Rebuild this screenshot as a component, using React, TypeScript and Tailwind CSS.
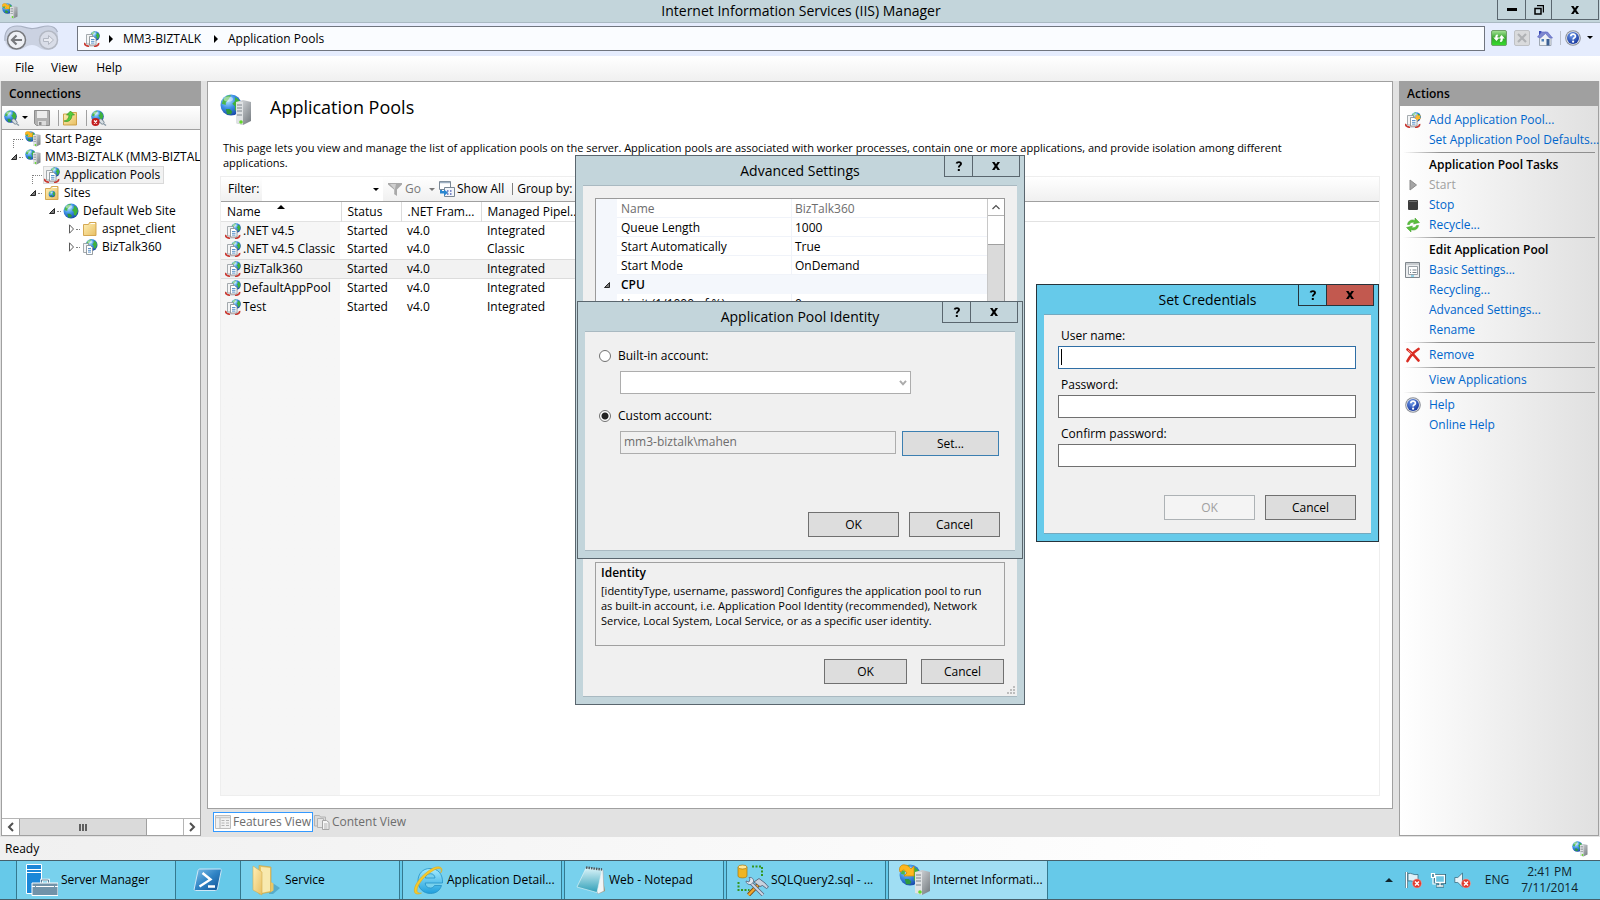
import { useState } from 'react';
import type { ReactNode } from 'react';
import { clsx } from 'clsx';

/* ---------- icons ---------- */

type IconProps = { className?: string };

// Gradients shared by every icon on the page
function IconDefs() {
  return (
    <svg width="0" height="0" className="absolute" aria-hidden="true">
      <defs>
        <radialGradient id="globe" cx="0.35" cy="0.3" r="0.8">
          <stop offset="0" stopColor="#b5e6ff" />
          <stop offset="0.45" stopColor="#3d90e6" />
          <stop offset="1" stopColor="#123c9c" />
        </radialGradient>
        <linearGradient id="steel" x1="0" y1="0" x2="1" y2="1">
          <stop offset="0" stopColor="#e4e7ea" />
          <stop offset="1" stopColor="#71777c" />
        </linearGradient>
        <linearGradient id="folder" x1="0" y1="0" x2="1" y2="1">
          <stop offset="0" stopColor="#fff0b8" />
          <stop offset="1" stopColor="#e8bf62" />
        </linearGradient>
        <radialGradient id="help" cx="0.4" cy="0.3" r="0.8">
          <stop offset="0" stopColor="#6f9bea" />
          <stop offset="1" stopColor="#0a2a94" />
        </radialGradient>
        <linearGradient id="ie" x1="0" y1="0" x2="0" y2="1">
          <stop offset="0" stopColor="#a5ecff" />
          <stop offset="1" stopColor="#1f9fdc" />
        </linearGradient>
        <linearGradient id="power" x1="0" y1="0" x2="1" y2="1">
          <stop offset="0" stopColor="#7fc0ea" />
          <stop offset="0.5" stopColor="#2f83c4" />
          <stop offset="1" stopColor="#0f4f93" />
        </linearGradient>
        <linearGradient id="pad" x1="0" y1="0" x2="0" y2="1">
          <stop offset="0" stopColor="#d9f3f8" />
          <stop offset="1" stopColor="#2f9fb8" />
        </linearGradient>
        <linearGradient id="go" x1="0" y1="0" x2="0" y2="1">
          <stop offset="0" stopColor="#a7e59a" />
          <stop offset="0.5" stopColor="#35a52c" />
          <stop offset="1" stopColor="#35e02c" />
        </linearGradient>
      </defs>
    </svg>
  );
}

function GlobeShape({ cx, cy, r }: { cx: number; cy: number; r: number }) {
  return (
    <g transform={`translate(${cx} ${cy}) scale(${r / 8})`}>
      <circle r="8" fill="url(#globe)" />
      <path d="M-6 -4 C-4 -7 -1 -8 0 -7 L-2 -4 L-4 -2 L-4 0 L-7 -1Z" fill="#4cb848" />
      <path d="M3 -6 C6 -5 8 -2 7 1 L5 5 L3 4 L3 1 L1 -1 L3 -3Z" fill="#3fb23c" />
      <path d="M-4 3 L-1 3 L1 5 L0 7 L-3 7Z" fill="#2f9a3c" />
      <ellipse cx="-2" cy="-4.5" rx="3.5" ry="2" fill="#fff" opacity="0.45" />
    </g>
  );
}

function GlobeIcon({ className }: IconProps) {
  return (
    <svg viewBox="0 0 16 16" className={clsx('size-4 shrink-0', className)} aria-hidden="true">
      <GlobeShape cx={8} cy={8} r={7.5} />
    </svg>
  );
}

function ServerGlobeIcon({ className, arrow = false }: IconProps & { arrow?: boolean }) {
  return (
    <svg viewBox="0 0 32 32" className={clsx('shrink-0', className ?? 'size-4')} aria-hidden="true">
      <GlobeShape cx={11} cy={11} r={10.5} />
      <path d="M16 8 L23 6 L31 8 V27 L23 31 L16 29Z" fill="url(#steel)" />
      <path d="M16 8 L23 8 V31 L16 29Z" fill="#dfe2e4" />
      <path d="M17 11h5M17 14h5M17 17h5M17 21h5" stroke="#7f868b" strokeWidth="1.2" />
      <circle cx="21" cy="28" r="1.8" fill="#63d82a" />
      {arrow && (
        <path
          d="M1 8 C-1 3 3 0 6 1 C9 1 10 3 12 5 L15 2 V12 H5 L8 9 C6 6 4 5 3 7Z"
          fill="#ffb81e"
          stroke="#d08a08"
          strokeWidth="0.8"
        />
      )}
    </svg>
  );
}

function PoolIcon({ className, spark = false }: IconProps & { spark?: boolean }) {
  return (
    <svg viewBox="0 0 16 16" className={clsx('size-4 shrink-0', className)} aria-hidden="true">
      <GlobeShape cx={11} cy={5} r={4.8} />
      <path d="M1 12 C0 14 3 15.500 8 15.500 S15 14 14.500 12" fill="none" stroke="#c93a32" strokeWidth="1.700" />
      <path d="M5 15.300h5" stroke="#d9dee2" strokeWidth="1.500" />
      <path d="M2.500 3.500h6v9.500h-6z" fill="#f4f5f6" stroke="#8f979c" strokeWidth="0.800" />
      <path d="M5.500 5.500h4l2.500 2v6.500h-6.500z" fill="#fff" stroke="#7d868c" strokeWidth="0.800" />
      <path d="M7 8.500h3.500M7 10.300h3.500M7 12.100h3.500" stroke="#4a86c4" strokeWidth="0.900" />
      {spark && (
        <path
          d="M12.500 1.500l1 2.300 2.400-.8-1.300 2.200 1.400 1.800-2.400.1-1.100 2.200-.9-2.200-2.300-.3 1.600-1.700-1.200-2.200 2.200.8z"
          fill="#ffb62e"
        />
      )}
    </svg>
  );
}

function AppIcon() {
  return (
    <svg viewBox="0 0 16 16" className="size-4 shrink-0" aria-hidden="true">
      <GlobeShape cx={9.500} cy={6} r={6} />
      <path d="M1.500 4.500h5v9h-5z" fill="#f4f5f6" stroke="#8f979c" strokeWidth="0.800" />
      <path d="M4.500 6.500h4l2 2v7h-6z" fill="#fff" stroke="#7d868c" strokeWidth="0.800" />
      <path d="M6 9.500h3M6 11.300h3M6 13.100h3" stroke="#4a86c4" strokeWidth="0.900" />
    </svg>
  );
}

function FolderIcon({ globe = false }: { globe?: boolean }) {
  return (
    <svg viewBox="0 0 16 16" className="size-4 shrink-0" aria-hidden="true">
      <path d="M1.500 3.500h5l1-2h6.500v13H1.500z" fill="url(#folder)" stroke="#d0a046" strokeWidth="0.900" />
      <path d="M8.500 2.500h4.500" stroke="#fff" />
      {globe && <GlobeShape cx={8} cy={9} r={3.300} />}
    </svg>
  );
}

function UpFolderIcon() {
  return (
    <svg viewBox="0 0 16 16" className="size-4 shrink-0" aria-hidden="true">
      <path d="M1.500 4h6l1-1.500h6v12.500h-13z" fill="url(#folder)" stroke="#c89b3e" strokeWidth="0.900" />
      <path d="M2 11C5 11 7 8 7 5H4.500L8.500 1l4 4H10C10 9 7 13 2 11z" fill="#55cc3c" stroke="#2d8f20" strokeWidth="0.600" />
    </svg>
  );
}

function ConnectIcon({ error = false }: { error?: boolean }) {
  return (
    <svg viewBox="0 0 16 16" className="size-4 shrink-0" aria-hidden="true">
      <GlobeShape cx={6.500} cy={6.500} r={6.300} />
      <path d="M9.500 10.500l2 2" stroke="#6d7f8c" strokeWidth="4" strokeLinecap="round" />
      <path d="M9.500 10.500l2 2" stroke="#d5dde2" strokeWidth="2.500" strokeLinecap="round" />
      <path d="M13 14l2 1.500" stroke="#8a9aa6" strokeWidth="1.400" />
      {error && (
        <>
          <circle cx="4.500" cy="12" r="4" fill="#c31d1d" />
          <path d="M3 10.500l3 3M6 10.500l-3 3" stroke="#fff" strokeWidth="1.300" />
        </>
      )}
    </svg>
  );
}

function SaveIcon() {
  return (
    <svg viewBox="0 0 16 16" className="size-4 shrink-0" aria-hidden="true">
      <path d="M.5.500h15v15h-13l-2-2z" fill="#b0b0b0" stroke="#8c8c8c" />
      <path d="M3 1h10v7H3z" fill="#ececec" />
      <path d="M4 11h8v4.500H4z" fill="#dcdcdc" />
      <path d="M5 12h2.500v3H5z" fill="#8c8c8c" />
    </svg>
  );
}

function HelpIcon() {
  return (
    <svg viewBox="0 0 16 16" className="size-4 shrink-0" aria-hidden="true">
      <circle cx="8" cy="8" r="7.800" fill="#8b8f98" />
      <circle cx="8" cy="8" r="6.800" fill="#e6e9ef" />
      <circle cx="8" cy="8" r="6" fill="url(#help)" />
      <path d="M5.800 6.300C5.800 3.300 10.400 3.300 10.400 6.200 10.400 7.900 8.100 7.700 8.100 9.600" fill="none" stroke="#fff" strokeWidth="1.700" />
      <circle cx="8.100" cy="11.700" r="1.100" fill="#fff" />
    </svg>
  );
}

function HistoryPill() {
  return (
    <svg viewBox="0 0 56 28" className="h-7 w-14 shrink-0" aria-hidden="true">
      <path
        d="M1 14 C1 5 6 1 13 1 C21 1 22 4 29 3.500 C36 3 38 1 44 1 C51 1 54 5 54 12 C54 20 50 25 43 25 C36 25 34 20 28 20 C22 20 20 25 12 25 C5 25 1 20 1 14Z"
        fill="#cbd2e2"
      />
      <path d="M1 16C0 5 6 1 13 1c8 0 9 3 16 2.500C36 3 38 1 44 1c5 0 8 2 9.500 6" fill="none" stroke="#a9b1c3" strokeWidth="1.200" />
      <circle cx="12.500" cy="15" r="9" fill="#eef0f5" stroke="#77797d" strokeWidth="1.500" />
      <path d="M18 15H8M12.500 10.500L8 15l4.500 4.500" fill="none" stroke="#77797d" strokeWidth="2.200" />
      <circle cx="44.500" cy="15" r="9" fill="#d9dde8" stroke="#b3b8c3" strokeWidth="1.500" />
      <path d="M39.500 13.500h5v-3l5 4.500-5 4.500v-3h-5z" fill="#e8eaf1" stroke="#b3b8c3" />
    </svg>
  );
}

function RefreshIcon() {
  return (
    <svg viewBox="0 0 16 16" className="size-4 shrink-0" aria-hidden="true">
      <rect x="0.500" y="0.500" width="15" height="15" rx="1.500" fill="url(#go)" stroke="#6f9f6b" />
      <path d="M6.500 4.500C4.500 4.500 4.300 6 4.300 7.500H2.300L5.500 11 8.500 7.500h-2c0-1.300 0-1.800.8-2.200z" fill="#fff" />
      <path d="M9.500 12c2 0 2.300-1.500 2.300-3.500h2L10.500 5 7.800 8.500h1.800c0 1.500 0 2-.9 2.500z" fill="#fff" />
    </svg>
  );
}

function StopLoadIcon() {
  return (
    <svg viewBox="0 0 16 16" className="size-4 shrink-0" aria-hidden="true">
      <rect x="0.500" y="0.500" width="15" height="15" rx="1.500" fill="#d9dadc" stroke="#bfc1c5" />
      <path d="M4 4l8 8M12 4l-8 8" stroke="#b0b2b5" strokeWidth="2.200" />
    </svg>
  );
}

function HomeIcon() {
  return (
    <svg viewBox="0 0 16 16" className="size-4 shrink-0" aria-hidden="true">
      <path d="M2 1h2.500v5H2z" fill="#3849b5" />
      <path d="M2.500 7.500L8.500 2l5.500 6v7.500H2.500z" fill="#eef1f4" stroke="#8e97a2" strokeWidth="0.800" />
      <path d="M.5 7L4.500 2h6l5 6h-3L8.500 3.500 3.500 8z" fill="#7f88cf" stroke="#5561c4" strokeWidth="0.600" />
      <path d="M9.500 9h3v6.500h-3z" fill="#3b5f93" />
      <path d="M4.500 9h2.500v2.500H4.500z" fill="#4f7fb8" />
    </svg>
  );
}

function FunnelIcon() {
  return (
    <svg viewBox="0 0 16 16" className="size-4 shrink-0" aria-hidden="true">
      <path d="M1 2h14v1.500L10 8.500V15l-3-2V8.500L1 3.500z" fill="#a9a9a9" />
      <path d="M3 3h6l-1 5v5l-.500-.500V8z" fill="#cfcfcf" />
    </svg>
  );
}

function ShowAllIcon() {
  return (
    <svg viewBox="0 0 16 16" className="size-4 shrink-0" aria-hidden="true">
      <path d="M.5.500h11v8H.5z" fill="#fff" stroke="#7a8794" />
      <path d="M1 1.500h10" stroke="#9fb0c2" strokeWidth="1.500" />
      <path d="M5.500 6.500h10v9h-10z" fill="#f2f5fa" stroke="#7a8794" />
      <path d="M8 10h1.500M11 10h1.500M8 13h1.500M11 13h1.500" stroke="#5566b8" strokeWidth="1.500" />
      <path d="M1 9v3.500h4V15l4-3.500L5 8.500V10H3V9z" fill="#2a86d0" />
    </svg>
  );
}

function PlayIcon() {
  return (
    <svg viewBox="0 0 16 16" className="size-4 shrink-0" aria-hidden="true">
      <path d="M5 3l6.500 5L5 13z" fill="#a5a5a5" stroke="#8b8b8b" />
    </svg>
  );
}

function StopIcon() {
  return (
    <svg viewBox="0 0 16 16" className="size-4 shrink-0" aria-hidden="true">
      <rect x="3" y="3" width="10" height="10" rx="1" fill="#3c3c3c" />
      <path d="M4 4.500h8" stroke="#6d6d6d" />
    </svg>
  );
}

function RecycleIcon() {
  return (
    <svg viewBox="0 0 16 16" className="size-4 shrink-0" aria-hidden="true">
      <path d="M2.500 7.500C3 3.500 7 2 10 3.500V1l4.500 4.500-6 1.500 1-1.500C7 5 5 5.500 4.500 7.500z" fill="#58c03a" stroke="#3f9a28" strokeWidth="0.500" />
      <path d="M13.500 8.500c-.5 4-4.500 5.500-7.500 4V15l-4.500-4.500 6-1.500-1 1.500c2.500.500 4.500 0 5-2z" fill="#58c03a" stroke="#3f9a28" strokeWidth="0.500" />
    </svg>
  );
}

function SettingsIcon() {
  return (
    <svg viewBox="0 0 16 16" className="size-4 shrink-0" aria-hidden="true">
      <path d="M.5.500h14v15H.5z" fill="#eceef0" stroke="#80878d" />
      <path d="M1 2h13" stroke="#a3a9ae" />
      <path d="M3.500 4.500h9v8h-9z" fill="#fff" stroke="#9aa1a7" />
      <path d="M5 8h1M5 10.500h1M7.500 8h4M7.500 10.500h4" stroke="#77818a" />
      <path d="M6 14h3" stroke="#35b5dd" />
    </svg>
  );
}

function RemoveIcon() {
  return (
    <svg viewBox="0 0 16 16" className="size-4 shrink-0" aria-hidden="true">
      <path d="M2.500 2.500C6 5 10 9 13.500 13.500M13.500 2C9 5 5 9 2.500 14" fill="none" stroke="#d92c22" strokeWidth="2.700" strokeLinecap="round" />
      <path d="M3 3l4 4" stroke="#f58a80" />
    </svg>
  );
}

function FeaturesIcon() {
  return (
    <svg viewBox="0 0 16 16" className="size-4 shrink-0" aria-hidden="true">
      <path d="M.5 1.500h15v13H.5z" fill="#f1f1f1" stroke="#bcbcbc" />
      <path d="M1 3.500h14M5 4v10" stroke="#c9c9c9" strokeWidth="1.500" />
      <path d="M6.500 6.500h3M6.500 9h3M6.500 11.500h3M11 6.500h3M11 9h3M11 11.500h3" stroke="#b4b4b4" />
    </svg>
  );
}

function ContentIcon() {
  return (
    <svg viewBox="0 0 16 16" className="size-4 shrink-0" aria-hidden="true">
      <path d="M.5 1.500h5l1 1.500h5v9H.5z" fill="#dadada" stroke="#b3b3b3" />
      <path d="M3.500 4.500h6v9h-6z" fill="#e6e6e6" stroke="#b3b3b3" />
      <path d="M8.500 6.500h4l2.500 2v7H8.500z" fill="#f6f6f6" stroke="#a5a5a5" />
      <path d="M10 10h3.500M10 12h3.500M10 14h3.500" stroke="#b0b0b0" />
    </svg>
  );
}

function Caret({ className }: IconProps) {
  return (
    <svg viewBox="0 0 6 3" className={clsx('h-[3px] w-1.5 shrink-0', className)} aria-hidden="true">
      <path d="M0 0h6L3 3z" fill="currentColor" />
    </svg>
  );
}

function Expander({ open }: { open: boolean }) {
  return (
    <svg viewBox="0 0 10 10" className="size-2.5 shrink-0" aria-hidden="true">
      {open ? (
        <path d="M7.500 2.500v5h-5z" fill="#7a7a7a" stroke="#262626" />
      ) : (
        <path d="M3.500 .8l4 4.200-4 4.200z" fill="#fff" stroke="#5a5a5a" />
      )}
    </svg>
  );
}

function CloseGlyph() {
  return (
    <svg viewBox="0 0 10 8" className="h-2 w-2.5" aria-hidden="true">
      <path d="M1 0h2.500L5 2.300 6.500 0H9L6.300 4 9 8H6.500L5 5.700 3.500 8H1l2.700-4z" fill="#000" />
    </svg>
  );
}

function HelpGlyph() {
  return (
    <svg viewBox="0 0 8 10" className="h-2.5 w-2" aria-hidden="true">
      <path d="M1.500 2.500C2 .800 6 .500 6 2.800 6 4.500 3.800 4.300 3.800 6.500" fill="none" stroke="#000" strokeWidth="1.900" />
      <path d="M2.800 8h2v2h-2z" fill="#000" />
    </svg>
  );
}

/* ---------- taskbar icons ---------- */

function ServerManagerIcon() {
  return (
    <svg viewBox="0 0 32 32" className="size-8 shrink-0" aria-hidden="true">
      <path d="M.5.500h15v29H.5z" fill="#1b87d8" stroke="#fff" />
      <path d="M1 5.500h14M1 8.500h14" stroke="#fff" />
      <path d="M15.500 19v-3h7v3" fill="none" stroke="#fff" strokeWidth="2.500" />
      <path d="M15.500 19v-3h7v3" fill="none" stroke="#5a7e96" strokeWidth="1" />
      <path d="M6 19h26v12.500H6z" fill="#7193a9" stroke="#fff" />
      <path d="M6 22.500h26" stroke="#fff" strokeDasharray="3 1 18 1 3 1" />
    </svg>
  );
}

function PowerShellIcon() {
  return (
    <svg viewBox="0 0 32 32" className="size-8 shrink-0" aria-hidden="true">
      <path d="M8 5h20c1 0 1.500.500 1.300 1.500L25.500 25c-.3 1-1 1.500-2 1.500h-20c-1 0-1.500-.5-1.300-1.500L6 6.500C6.300 5.500 7 5 8 5z" fill="url(#power)" stroke="#cde7f7" />
      <path d="M10.500 9l8 6.500-11 7M16 22.500h7" fill="none" stroke="#fff" strokeWidth="2.400" />
    </svg>
  );
}

function ExplorerIcon() {
  return (
    <svg viewBox="0 0 32 32" className="size-8 shrink-0" aria-hidden="true">
      <path d="M20 18l9 6-7 6h-4z" fill="#3f93b3" opacity="0.600" />
      <path d="M8 1.500l12 1.500v25l-12 2z" fill="#e8c764" stroke="#c9a040" strokeWidth="0.600" />
      <path d="M10 3l9 1v23l-9 2z" fill="#f8e9ae" />
      <path d="M2 2l9 6v23l-9-5z" fill="url(#folder)" stroke="#d5ae4d" strokeWidth="0.600" />
      <path d="M20 18l2.500 1.500v7L20 28z" fill="#e9c766" />
    </svg>
  );
}

function ExplorerBrowserIcon() {
  return (
    <svg viewBox="0 0 32 32" className="size-8 shrink-0" aria-hidden="true">
      <path
        d="M17 4.500C9.500 4.500 5 10 5 17s5 12.500 12.500 12.500c5.500 0 9.500-3 11-8h-7c-1 1.700-2.200 2.500-4 2.500-3.300 0-5.200-2-5.300-5H29.500C30 10 25 4.500 17 4.500zM12.300 14c.4-2.800 2.200-4.300 5-4.300s4.400 1.500 4.700 4.300z"
        fill="url(#ie)"
        stroke="#2492c6"
        strokeWidth="0.800"
      />
      <path
        d="M29 6C29 1 21 2 14 8 6 14 0 23 1.500 28c.8 2.500 4 2.500 7 1-3 .500-4.500-.5-4.500-2.500C4 22 9.500 14 16 9.500 21.500 5 27 3 28 5.500 28.500 6.500 28 8 27.500 9 28.500 8 29 7 29 6z"
        fill="#f7c92a"
        stroke="#dda414"
        strokeWidth="0.500"
      />
    </svg>
  );
}

function NotepadIcon() {
  return (
    <svg viewBox="0 0 32 32" className="size-8 shrink-0" aria-hidden="true">
      <path d="M26 5l4 22-5 2z" fill="#a98a4f" />
      <path d="M11 3.500L28 6l1 21-6 3z" fill="#f2f5f6" stroke="#9aa5aa" strokeWidth="0.600" />
      <path d="M11 4l16 2-5 22.500L2 23z" fill="url(#pad)" stroke="#e8f6f9" strokeWidth="0.600" />
      <path d="M11 3.500l16 2" stroke="#4c5a60" strokeWidth="2.500" strokeDasharray="1.500 1" />
    </svg>
  );
}

function SqlIcon() {
  return (
    <svg viewBox="0 0 32 32" className="size-8 shrink-0" aria-hidden="true">
      <path d="M15 2.500h10v11M1.500 18v8h11" fill="none" stroke="#35961f" strokeWidth="2" strokeDasharray="2 1.500" />
      <path d="M1 3v9c0 2.500 9 2.500 9 0V3z" fill="#efb522" stroke="#a87708" strokeWidth="0.700" />
      <ellipse cx="5.500" cy="3" rx="4.500" ry="2" fill="#ffe89a" stroke="#a87708" strokeWidth="0.700" />
      <path d="M22 20L11.500 31" stroke="#7d4a12" strokeWidth="4" />
      <path d="M22 20L11.500 31" stroke="#f0a62c" strokeWidth="2.500" />
      <path d="M13 18l13 13" stroke="#5b667d" strokeWidth="3.500" />
      <path d="M13 18l13 13" stroke="#cdd6e4" strokeWidth="2" />
      <path d="M9 17l3 1 1-3-1-1.500c3-.5 5 1.500 4.500 4.500L14 20.500C11.500 21 9 19.500 9 17z" fill="#dfe6ee" stroke="#56627c" strokeWidth="0.800" />
      <path d="M17 18l5-3.500 6 4.500 3.500 4-2 1.500-4-3-2.500 1z" fill="#c9d2de" stroke="#4a5570" strokeWidth="0.800" />
    </svg>
  );
}

/* ---------- shared bits ---------- */

const pushButton =
  'flex h-[25px] items-center justify-center border text-xs focus:outline-none disabled:border-[#adb2b5] disabled:bg-[#f4f4f4] disabled:text-[#a0a0a0]';

function PushButton({
  children,
  className,
  accent = false,
  disabled = false,
}: {
  children: ReactNode;
  className?: string;
  accent?: boolean;
  disabled?: boolean;
}) {
  return (
    <button
      type="button"
      disabled={disabled}
      className={clsx(pushButton, 'bg-[#dddddd]', accent ? 'border-[#3c7fb1]' : 'border-[#707070]', className)}
    >
      {children}
    </button>
  );
}

function Dialog({
  title,
  children,
  className,
  active = false,
}: {
  title: string;
  children: ReactNode;
  className: string;
  active?: boolean;
}) {
  return (
    <section
      role="dialog"
      aria-label={title}
      className={clsx(
        'absolute flex flex-col border px-[7px] pb-[7px]',
        active ? 'border-[#26343c] bg-[#66caea]' : 'border-[#5a666e] bg-[#c3d5db]',
        className,
      )}
    >
      <header className="relative flex h-[29px] shrink-0 items-center justify-center">
        <h2 className="text-sm leading-5">{title}</h2>
        <div
          className={clsx(
            'absolute right-[-3px] top-0 flex h-[21px] divide-x border border-t-0',
            active ? 'divide-[#26343c] border-[#26343c]' : 'divide-[#5a666e] border-[#5a666e]',
          )}
        >
          <button type="button" aria-label="Help" className="flex w-7 items-center justify-center">
            <HelpGlyph />
          </button>
          <button
            type="button"
            aria-label="Close"
            className={clsx('flex w-[46px] items-center justify-center', active && 'bg-[#c2594f]')}
          >
            <CloseGlyph />
          </button>
        </div>
      </header>
      <div
        className={clsx(
          'relative flex flex-1 flex-col border-y bg-[#f0f0f0]',
          active ? 'border-[#74a9bf]' : 'border-[#a9b9c1]',
        )}
      >
        {children}
      </div>
    </section>
  );
}

/* ---------- top bars ---------- */

function TitleBar() {
  return (
    <header className="relative flex h-[23px] shrink-0 items-center border-b border-[#a9b9c2] bg-[#c3d5db] pl-0.5">
      <ServerGlobeIcon arrow />
      <h1 className="flex-1 pr-4 text-center text-sm leading-5">Internet Information Services (IIS) Manager</h1>
      <div className="absolute right-px top-0 flex h-5 divide-x divide-[#5a666e] border border-t-0 border-[#5a666e]">
        <button type="button" aria-label="Minimize" className="flex w-7 items-center justify-center">
          <span className="h-[3px] w-2.5 bg-black" />
        </button>
        <button type="button" aria-label="Restore" className="flex w-[26px] items-center justify-center">
          <svg viewBox="0 0 10 10" className="size-2.5" aria-hidden="true">
            <path d="M3 .5h6.500V7.500M1 3.500h6V9H1z" fill="none" stroke="#000" strokeWidth="1.500" />
          </svg>
        </button>
        <button type="button" aria-label="Close" className="flex w-[46px] items-center justify-center">
          <CloseGlyph />
        </button>
      </div>
    </header>
  );
}

function Chevron() {
  return (
    <svg viewBox="0 0 4 8" className="h-2 w-1 shrink-0" aria-hidden="true">
      <path d="M0 0l4 4-4 4z" fill="#000" />
    </svg>
  );
}

function AddressBar() {
  return (
    <div className="flex h-[33px] shrink-0 items-center bg-[#e5ecfd] pb-0.5 pl-1 pr-[7px]">
      <HistoryPill />
      <nav
        aria-label="Location"
        className="ml-[17px] flex h-[25px] flex-1 items-center border border-[#70757f] bg-[#fafcff] pl-1.5"
      >
        <PoolIcon />
        <span className="ml-[9px]">
          <Chevron />
        </span>
        <a href="#server" className="ml-2.5 w-[79px] whitespace-nowrap">
          MM3-BIZTALK
        </a>
        <span className="ml-3">
          <Chevron />
        </span>
        <a href="#pools" className="ml-2.5">
          Application Pools
        </a>
      </nav>
      <div className="mb-0.5 ml-1.5 flex items-center">
        <button type="button" aria-label="Refresh">
          <RefreshIcon />
        </button>
        <button type="button" aria-label="Stop loading" className="ml-[7px]">
          <StopLoadIcon />
        </button>
        <button type="button" aria-label="Home" className="ml-[7px]">
          <HomeIcon />
        </button>
        <span className="ml-[7px] mr-1 h-3.5 w-px bg-[#b9bfcc]" />
        <button type="button" aria-label="Help" className="flex items-center gap-1.5">
          <HelpIcon />
          <Caret />
        </button>
      </div>
    </div>
  );
}

function MenuBar() {
  return (
    <nav className="flex h-[25px] shrink-0 items-center bg-linear-to-b from-white to-[#f0f0f0] pb-0.5 pl-[7px]">
      {['File', 'View', 'Help'].map((item) => (
        <button key={item} type="button" className="px-2 first:pr-[9px] last:pl-[11px]">
          {item}
        </button>
      ))}
    </nav>
  );
}

/* ---------- connections ---------- */

type TreeNode = {
  label: string;
  depth: number;
  icon: ReactNode;
  open?: boolean;
  selected?: boolean;
};

const tree: TreeNode[] = [
  { label: 'Start Page', depth: 0, icon: <ServerGlobeIcon arrow /> },
  { label: 'MM3-BIZTALK (MM3-BIZTAL', depth: 0, icon: <ServerGlobeIcon />, open: true },
  { label: 'Application Pools', depth: 1, icon: <PoolIcon />, selected: true },
  { label: 'Sites', depth: 1, icon: <FolderIcon globe />, open: true },
  { label: 'Default Web Site', depth: 2, icon: <GlobeIcon />, open: true },
  { label: 'aspnet_client', depth: 3, icon: <FolderIcon />, open: false },
  { label: 'BizTalk360', depth: 3, icon: <AppIcon />, open: false },
];

const indents = ['pl-[7px]', 'pl-[26px]', 'pl-[45px]', 'pl-[64px]'];

function ConnectionTree() {
  return (
    <ul className="flex-1 overflow-hidden">
      {tree.map((node) => (
        <li key={node.label} className={clsx('flex h-[18px] items-center whitespace-nowrap', indents[node.depth])}>
          {node.open === undefined ? (
            <span className="ml-1 mt-2 h-[9px] w-2.5 shrink-0 border-l border-t border-dotted border-[#808080]" />
          ) : (
            <>
              <Expander open={node.open} />
              <span className="w-1 shrink-0 border-t border-dotted border-[#808080]" />
            </>
          )}
          <span
            className={clsx(
              'ml-px flex h-[18px] items-center gap-1 border pr-[3px]',
              node.selected ? 'border-[#d9d9d9] bg-[#f2f2f2]' : 'border-transparent',
            )}
          >
            {node.icon}
            {node.label}
          </span>
        </li>
      ))}
    </ul>
  );
}

function PanelHeader({ children }: { children: string }) {
  return <h2 className="flex h-6 shrink-0 items-center bg-[#a0a0a0] pl-[7px] font-semibold">{children}</h2>;
}

function ConnectionsPanel() {
  return (
    <aside className="flex w-[200px] shrink-0 flex-col border border-[#a0a0a0] bg-white">
      <PanelHeader>Connections</PanelHeader>
      <div className="flex h-6 shrink-0 items-center border-b border-[#a0a0a0] bg-linear-to-b from-white to-[#ececec] pl-0.5">
        <button type="button" aria-label="Connect" className="flex items-center gap-0.5">
          <ConnectIcon />
          <Caret />
        </button>
        <button type="button" aria-label="Save connections" className="ml-1.5">
          <SaveIcon />
        </button>
        <span className="ml-2 h-4 w-px bg-[#a0a0a0]" />
        <button type="button" aria-label="Up" className="ml-[3px]">
          <UpFolderIcon />
        </button>
        <span className="ml-2 h-4 w-px bg-[#a0a0a0]" />
        <button type="button" aria-label="Disconnect" className="ml-1">
          <ConnectIcon error />
        </button>
      </div>
      <ConnectionTree />
      <div className="flex h-[17px] shrink-0 border-t border-[#b5b5b5]">
        <button type="button" aria-label="Scroll left" className="flex w-[17px] items-center justify-center">
          <svg viewBox="0 0 8 10" className="h-2.5 w-2" aria-hidden="true">
            <path d="M6 1L2 5l4 4" fill="none" stroke="#505050" strokeWidth="2" />
          </svg>
        </button>
        <div className="flex w-32 items-center justify-center gap-px border-x border-[#a0a0a0] bg-[#dadada]">
          <span className="h-[7px] w-0.5 bg-[#606060]" />
          <span className="h-[7px] w-0.5 bg-[#606060]" />
          <span className="h-[7px] w-0.5 bg-[#606060]" />
        </div>
        <div className="flex-1" />
        <button
          type="button"
          aria-label="Scroll right"
          className="flex w-[17px] items-center justify-center border-l border-[#b5b5b5]"
        >
          <svg viewBox="0 0 8 10" className="h-2.5 w-2" aria-hidden="true">
            <path d="M2 1l4 4-4 4" fill="none" stroke="#505050" strokeWidth="2" />
          </svg>
        </button>
      </div>
    </aside>
  );
}

/* ---------- application pools ---------- */

const pools = [
  { name: '.NET v4.5', mode: 'Integrated' },
  { name: '.NET v4.5 Classic', mode: 'Classic' },
  { name: 'BizTalk360', mode: 'Integrated' },
  { name: 'DefaultAppPool', mode: 'Integrated' },
  { name: 'Test', mode: 'Integrated' },
];

function FilterBar() {
  const [filter, setFilter] = useState('');

  return (
    <div className="flex h-[25px] shrink-0 items-center whitespace-nowrap border-b border-[#a0a0a0] bg-linear-to-b from-white to-[#f0f0f0] pl-[7px]">
      <label htmlFor="filter" className="w-[34px]">
        Filter:
      </label>
      <div className="flex h-6 w-[121px] items-center bg-white pr-1">
        <input
          id="filter"
          value={filter}
          onChange={(e) => setFilter(e.target.value)}
          className="h-6 w-full min-w-0 px-1 outline-none"
        />
        <Caret />
      </div>
      <button type="button" disabled className="ml-1 flex items-center gap-0.5 text-[#7a7a7a]">
        <FunnelIcon />
        Go
      </button>
      <Caret className="ml-2 text-[#7a7a7a]" />
      <button type="button" className="ml-1 flex items-center gap-0.5">
        <ShowAllIcon />
        Show All
      </button>
      <span className="ml-2 h-3 w-px bg-[#808080]" />
      <span className="ml-1">Group by:</span>
    </div>
  );
}

const headCell = 'whitespace-nowrap px-1.5 pt-0.5 font-normal leading-4';

function PoolTable() {
  return (
    <table className="w-full table-fixed border-collapse text-left">
      <colgroup>
        <col className="w-[120px]" />
        <col className="w-[60px]" />
        <col className="w-20" />
        <col className="w-[120px]" />
        <col />
      </colgroup>
      <thead>
        <tr className="h-[19px] border-b border-[#e2e2e2] bg-white">
          <th className={clsx(headCell, 'relative border-r border-[#dcdcdc]')}>
            Name
            <svg viewBox="0 0 8 4" className="absolute left-14 top-[3px] h-1 w-2" aria-hidden="true">
              <path d="M0 4h8L4 0z" fill="#000" />
            </svg>
          </th>
          <th className={clsx(headCell, 'border-r border-[#dcdcdc]')}>Status</th>
          <th className={clsx(headCell, 'border-r border-[#dcdcdc]')}>.NET Fram...</th>
          <th className={headCell}>Managed Pipel...</th>
          <th />
        </tr>
      </thead>
      <tbody>
        {pools.map((pool) => {
          const selected = pool.name === 'BizTalk360';
          const cell = clsx('px-1.5 leading-4', selected && 'border-y border-[#dcdcdc] bg-[#f2f2f2]');
          return (
            <tr key={pool.name} className="h-[19px]">
              <td className={clsx('whitespace-nowrap pl-1', selected && 'border-y border-[#dcdcdc] bg-[#f2f2f2]')}>
                <span className="flex h-4 items-center gap-0.5">
                  <PoolIcon />
                  {pool.name}
                </span>
              </td>
              <td className={cell}>Started</td>
              <td className={cell}>v4.0</td>
              <td className={cell}>{pool.mode}</td>
              <td />
            </tr>
          );
        })}
      </tbody>
    </table>
  );
}

function PoolsPage() {
  return (
    <main className="flex min-w-0 flex-1 flex-col">
      <div className="flex flex-1 flex-col border border-[#a0a0a0] bg-white px-3 pb-3 pt-3">
        <div className="flex h-8 items-center gap-[18px]">
          <ServerGlobeIcon className="size-8" />
          <h2 className="mb-1.5 text-lg leading-6">Application Pools</h2>
        </div>
        <p className="mt-3.5 h-9 pl-[3px] text-[11px] leading-[15px]">
          This page lets you view and manage the list of application pools on the server. Application pools are
          associated with worker processes, contain one or more applications, and provide isolation among different
          <br />
          applications.
        </p>
        <div className="flex flex-1 flex-col border border-[#eeeeee]">
          <FilterBar />
          <div className="flex-1 bg-linear-to-r from-[#f6f6f6] from-[119px] to-white to-[119px]">
            <PoolTable />
          </div>
        </div>
      </div>
      <div role="tablist" className="flex h-7 shrink-0 items-center pb-0.5 pl-1.5 text-[#6d6d6d]">
        <button
          type="button"
          role="tab"
          aria-selected="true"
          className="flex h-5 items-center gap-0.5 whitespace-nowrap border border-[#3399ff] bg-white px-px"
        >
          <FeaturesIcon />
          Features View
        </button>
        <button type="button" role="tab" aria-selected="false" className="ml-px flex items-center gap-0.5">
          <ContentIcon />
          Content View
        </button>
      </div>
    </main>
  );
}

/* ---------- actions ---------- */

type Action = { label: string; icon?: ReactNode; heading?: boolean; disabled?: boolean };

const actionGroups: Action[][] = [
  [{ label: 'Add Application Pool...', icon: <PoolIcon spark /> }, { label: 'Set Application Pool Defaults...' }],
  [
    { label: 'Application Pool Tasks', heading: true },
    { label: 'Start', icon: <PlayIcon />, disabled: true },
    { label: 'Stop', icon: <StopIcon /> },
    { label: 'Recycle...', icon: <RecycleIcon /> },
  ],
  [
    { label: 'Edit Application Pool', heading: true },
    { label: 'Basic Settings...', icon: <SettingsIcon /> },
    { label: 'Recycling...' },
    { label: 'Advanced Settings...' },
    { label: 'Rename' },
  ],
  [{ label: 'Remove', icon: <RemoveIcon /> }],
  [{ label: 'View Applications' }],
  [{ label: 'Help', icon: <HelpIcon /> }, { label: 'Online Help' }],
];

function ActionLabel({ action }: { action: Action }) {
  if (action.heading) return <h3 className="font-semibold">{action.label}</h3>;
  if (action.disabled) return <span className="text-[#a0a0a0]">{action.label}</span>;
  return (
    <a href="#action" className="text-[#0066cc]">
      {action.label}
    </a>
  );
}

function ActionsPanel() {
  return (
    <aside className="flex w-[200px] shrink-0 flex-col border border-[#a0a0a0] bg-linear-to-r from-white to-[#e0e0e0]">
      <PanelHeader>Actions</PanelHeader>
      <div className="px-[3px] pt-1">
        {actionGroups.map((group, i) => (
          <div key={group[0].label}>
            {i > 0 && <hr className="my-0.5 h-px border-0 bg-linear-to-r from-transparent to-[#8f8f8f] to-20%" />}
            <ul>
              {group.map((action) => (
                <li key={action.label} className="flex h-5 items-center gap-2 whitespace-nowrap pl-0.5">
                  <span className="size-4 shrink-0">{action.icon}</span>
                  <ActionLabel action={action} />
                </li>
              ))}
            </ul>
          </div>
        ))}
      </div>
    </aside>
  );
}

/* ---------- dialogs ---------- */

const properties = [
  ['Queue Length', '1000'],
  ['Start Automatically', 'True'],
  ['Start Mode', 'OnDemand'],
];

function PropertyRow({ name, value, muted = false }: { name: string; value: string; muted?: boolean }) {
  return (
    <tr className={clsx('h-[19px]', muted && 'text-[#6d6d6d]')}>
      <td className="w-[21px] bg-[#f4f7fc]" />
      <td className="w-[175px] border-b border-r border-[#f0f3f9] pl-1 pt-0.5 leading-4">{name}</td>
      <td className="border-b border-[#f0f3f9] pl-[3px] pt-0.5 leading-4">{value}</td>
    </tr>
  );
}

function AdvancedSettingsDialog() {
  return (
    <Dialog title="Advanced Settings" className="left-[575px] top-[155px] h-[550px] w-[450px]">
      <div className="flex flex-1 flex-col px-3 pt-3">
        <div className="flex flex-1 overflow-hidden border border-[#9a9a9a] bg-white">
          <div className="flex-1">
            <table className="w-full table-fixed border-separate border-spacing-0 text-left">
              <tbody>
                <PropertyRow name="Name" value="BizTalk360" muted />
                {properties.map(([name, value]) => (
                  <PropertyRow key={name} name={name} value={value} />
                ))}
                <tr className="h-[19px] bg-[#f4f7fc]">
                  <td className="pl-1.5">
                    <Expander open />
                  </td>
                  <th colSpan={2} className="pl-1 font-semibold leading-4">
                    CPU
                  </th>
                </tr>
                <PropertyRow name="Limit (1/1000 of %)" value="0" />
              </tbody>
            </table>
          </div>
          <div className="flex w-[17px] flex-col border-l border-[#c8c8c8]">
            <button
              type="button"
              aria-label="Scroll up"
              className="flex h-[17px] items-center justify-center border-b border-[#b5b5b5]"
            >
              <svg viewBox="0 0 10 6" className="h-1.5 w-2.5" aria-hidden="true">
                <path d="M1.500 5L5 1.500 8.500 5" fill="none" stroke="#505050" strokeWidth="1.200" />
              </svg>
            </button>
            <div className="h-7" />
            <div className="flex-1 border-t border-[#a0a0a0] bg-[#dadada]" />
          </div>
        </div>
        <div className="mt-2 h-[84px] border border-[#a0a0a0] px-[5px] pt-0.5">
          <h3 className="mb-0.5 font-semibold leading-4">Identity</h3>
          <p className="whitespace-nowrap text-[11px] leading-[15px]">
            [identityType, username, password] Configures the application pool to run
            <br />
            as built-in account, i.e. Application Pool Identity (recommended), Network
            <br />
            Service, Local System, Local Service, or as a specific user identity.
          </p>
        </div>
        <div className="mb-3 mr-px mt-[13px] flex justify-end gap-3.5">
          <PushButton className="w-[83px]">OK</PushButton>
          <PushButton className="w-[83px]">Cancel</PushButton>
        </div>
      </div>
      <svg viewBox="0 0 8 8" className="absolute bottom-0.5 right-0.5 size-2" aria-hidden="true">
        <path d="M6 0h2v2H6zM3 3h2v2H3zM6 3h2v2H6zM0 6h2v2H0zM3 6h2v2H3zM6 6h2v2H6z" fill="#bdbdbd" />
      </svg>
    </Dialog>
  );
}

const radio =
  'size-3 shrink-0 appearance-none rounded-full border border-[#707070] bg-white checked:bg-[radial-gradient(circle,#222_3px,#fff_4px)]';

function PoolIdentityDialog() {
  const [account, setAccount] = useState('custom');

  return (
    <Dialog title="Application Pool Identity" className="left-[577px] top-[301px] h-[258px] w-[446px]">
      <form className="flex flex-1 flex-col px-3.5 pt-4" onSubmit={(e) => e.preventDefault()}>
        <label className="flex h-4 items-center gap-[7px]">
          <input
            type="radio"
            name="account"
            checked={account === 'builtin'}
            onChange={() => setAccount('builtin')}
            className={radio}
          />
          Built-in account:
        </label>
        <div className="relative ml-[21px] mt-[7px] w-[291px]">
          <select
            disabled
            aria-label="Built-in account"
            className="block h-[23px] w-full appearance-none border border-[#adadad] bg-white px-1 opacity-100"
          >
            <option />
          </select>
          <svg viewBox="0 0 8 6" className="pointer-events-none absolute right-1 top-[9px] h-1.5 w-2" aria-hidden="true">
            <path d="M1 .8l3 3.500L7 .800" fill="none" stroke="#ababab" strokeWidth="2" />
          </svg>
        </div>
        <label className="mt-3.5 flex h-4 items-center gap-[7px]">
          <input
            type="radio"
            name="account"
            checked={account === 'custom'}
            onChange={() => setAccount('custom')}
            className={radio}
          />
          Custom account:
        </label>
        <div className="ml-[21px] mt-[7px] flex items-start gap-1.5">
          <input
            readOnly
            aria-label="Custom account name"
            value="mm3-biztalk\mahen"
            className="h-[23px] w-[276px] border border-[#adadad] bg-transparent px-[3px] pb-0.5 text-[#6d6d6d] outline-none"
          />
          <PushButton accent className="w-[97px]">
            Set...
          </PushButton>
        </div>
        <div className="mb-[13px] mr-px mt-auto flex justify-end gap-2.5">
          <PushButton className="w-[91px]">OK</PushButton>
          <PushButton className="w-[91px]">Cancel</PushButton>
        </div>
      </form>
    </Dialog>
  );
}

function CredentialField({
  id,
  label,
  type,
  focused = false,
}: {
  id: string;
  label: string;
  type: string;
  focused?: boolean;
}) {
  return (
    <div className="relative mb-2">
      <label htmlFor={id} className="block pb-0.5 pl-[3px] leading-4">
        {label}
      </label>
      <input
        id={id}
        type={type}
        className={clsx(
          'block h-[23px] w-full border bg-white px-1 outline-none',
          focused ? 'border-[#2f6ea5]' : 'border-[#707070]',
        )}
      />
      {focused && <span className="absolute bottom-1 left-[3px] h-4 w-px bg-black" />}
    </div>
  );
}

function SetCredentialsDialog() {
  return (
    <Dialog active title="Set Credentials" className="left-[1036px] top-[284px] h-[258px] w-[343px]">
      <form className="flex flex-1 flex-col pl-3.5 pr-[15px] pt-[13px]" onSubmit={(e) => e.preventDefault()}>
        <CredentialField focused id="username" label="User name:" type="text" />
        <CredentialField id="password" label="Password:" type="password" />
        <CredentialField id="confirm" label="Confirm password:" type="password" />
        <div className="mb-[13px] mt-auto flex justify-end gap-2.5">
          <PushButton disabled className="w-[91px]">
            OK
          </PushButton>
          <PushButton className="w-[91px]">Cancel</PushButton>
        </div>
      </form>
    </Dialog>
  );
}

/* ---------- bottom bars ---------- */

function StatusBar() {
  return (
    <div className="flex h-[23px] shrink-0 items-center justify-between bg-linear-to-r from-[#f0f0f0] to-white to-80% pl-[5px] pr-3">
      <span>Ready</span>
      <ServerGlobeIcon />
    </div>
  );
}

const taskButton = 'flex h-full items-center border-x border-[#35798f] whitespace-nowrap';

const tasks = [
  { label: 'Service', icon: <ExplorerIcon /> },
  { label: 'Application Detail...', icon: <ExplorerBrowserIcon /> },
  { label: 'Web - Notepad', icon: <NotepadIcon /> },
  { label: 'SQLQuery2.sql - ...', icon: <SqlIcon /> },
  { label: 'Internet Informati...', icon: <ServerGlobeIcon arrow className="size-8" />, active: true },
];

function ErrorBadge() {
  return (
    <g>
      <circle cx="12" cy="11.500" r="4.500" fill="#e0382c" stroke="#f4a9a2" strokeWidth="0.600" />
      <path d="M10 9.500l4 4M14 9.500l-4 4" stroke="#fff" strokeWidth="1.500" />
    </g>
  );
}

function Tray() {
  return (
    <div className="ml-auto flex items-center pr-[22px] text-[#10242c]">
      <svg viewBox="0 0 8 4" className="h-1 w-2" aria-hidden="true">
        <path d="M0 4h8L4 0z" fill="#10242c" />
      </svg>
      <svg viewBox="0 0 17 16" className="ml-3 h-4 w-[17px]" aria-hidden="true">
        <path d="M1.500 0v16" stroke="#3b6f84" strokeWidth="3" />
        <path d="M1.500 0v16" stroke="#fff" strokeWidth="1.500" />
        <path d="M3 1.500c4-1 5 2 10 1v7c-5 1-6-1.500-10-.5z" fill="#dff1f8" stroke="#3b6f84" strokeWidth="0.800" />
        <ErrorBadge />
      </svg>
      <svg viewBox="0 0 16 16" className="ml-2 size-4" aria-hidden="true">
        <path d="M5.500 3.500h9v7h-9z" fill="#6fc6e2" stroke="#2d5f73" strokeWidth="3" />
        <path d="M10 11v3M6 14h8" stroke="#2d5f73" strokeWidth="3" />
        <path d="M5.500 3.500h9v7h-9z" fill="#6fc6e2" stroke="#fff" strokeWidth="1.300" />
        <path d="M10 11v3M6.500 14h7" stroke="#fff" strokeWidth="1.300" />
        <path d="M1.500 1.500h3v4h-3zM3 6v6h3" fill="#4d8ea6" stroke="#fff" strokeWidth="1.200" />
      </svg>
      <svg viewBox="0 0 17 16" className="ml-2 h-4 w-[17px]" aria-hidden="true">
        <path d="M.8 5.500h3L8.500 1v14L3.800 10.500h-3z" fill="#e9f5fa" stroke="#3b6f84" strokeWidth="0.800" />
        <ErrorBadge />
      </svg>
      <span className="ml-3.5">ENG</span>
      <div className="ml-3 text-center leading-4">
        <div>2:41 PM</div>
        <div>7/11/2014</div>
      </div>
    </div>
  );
}

function Taskbar() {
  return (
    <footer className="flex h-10 shrink-0 items-stretch border-y border-[#46606b] bg-[#66c9e9] pl-4">
      <button type="button" className={clsx(taskButton, 'w-40 gap-[3px] bg-[#78d1ed] pl-[9px]')}>
        <ServerManagerIcon />
        Server Manager
      </button>
      <button type="button" aria-label="PowerShell" className="flex w-16 items-center justify-center">
        <PowerShellIcon />
      </button>
      <div className="flex gap-[2px]">
        {tasks.map((task) => (
          <button
            key={task.label}
            type="button"
            className={clsx(taskButton, 'w-40 gap-0.5 pl-2.5', task.active ? 'bg-[#a0def3]' : 'bg-[#78d1ed]')}
          >
            {task.icon}
            {task.label}
          </button>
        ))}
      </div>
      <Tray />
    </footer>
  );
}

export default function App() {
  return (
    <div className="relative flex min-h-screen flex-col overflow-hidden bg-[#e2e2e2] font-['Open_Sans',sans-serif] text-xs text-black">
      <IconDefs />
      <TitleBar />
      <AddressBar />
      <MenuBar />
      <div className="flex flex-1">
        <div className="flex pb-px pl-px">
          <ConnectionsPanel />
        </div>
        <div className="flex min-w-0 flex-1 px-1.5">
          <PoolsPage />
        </div>
        <div className="flex pb-px pr-px">
          <ActionsPanel />
        </div>
      </div>
      <StatusBar />
      <Taskbar />
      <AdvancedSettingsDialog />
      <PoolIdentityDialog />
      <SetCredentialsDialog />
    </div>
  );
}
